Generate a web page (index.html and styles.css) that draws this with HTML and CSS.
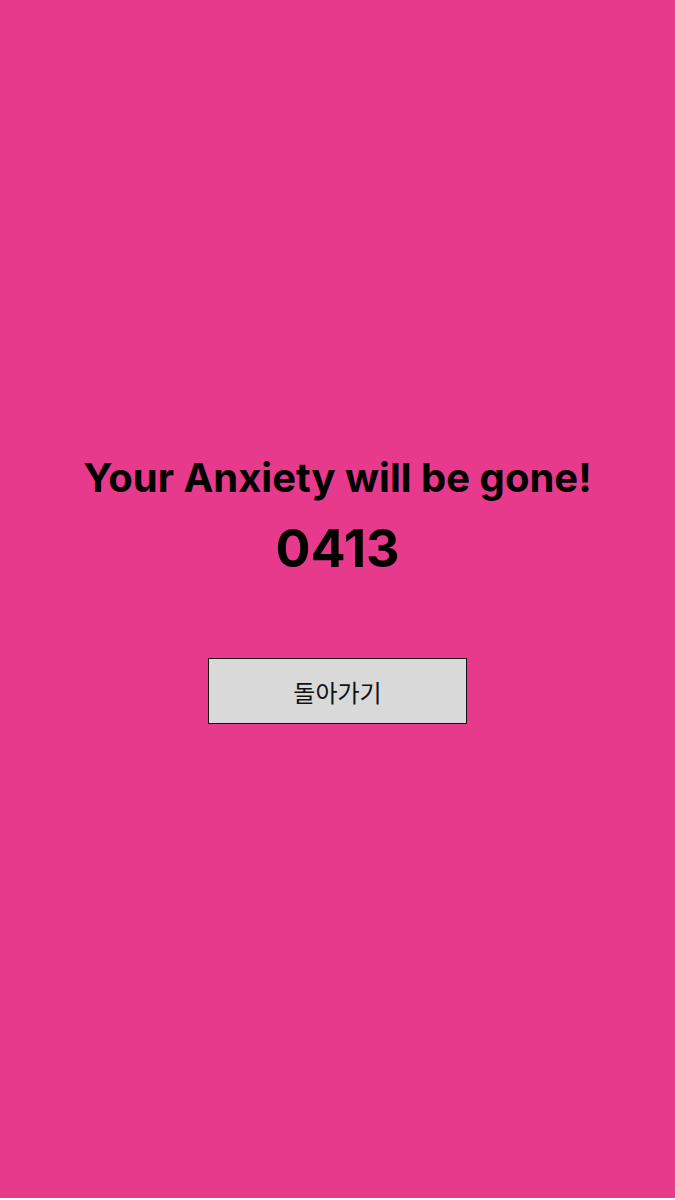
FILE: index.html
```html
<!DOCTYPE html>
<html lang="ko">
<head>
  <meta charset="UTF-8">
  <meta name="viewport" content="width=device-width, initial-scale=1.0">
  <title>Result</title>
  <link rel="stylesheet" href="styles.css">
</head>
<body>
  <main class="screen">
    <h1 class="title">Your Anxiety will be gone!</h1>
    <p class="code">0413</p>
    <button class="back-btn" type="button">돌아가기</button>
  </main>
</body>
</html>
```

FILE: styles.css
```css
* {
  margin: 0;
  padding: 0;
  box-sizing: border-box;
}

body {
  font-family: Inter, "Noto Sans CJK KR", sans-serif;
  background: #fff;
  color: #000;
}

.screen {
  height: 1198px;
  padding-bottom: 20px;
  background: #e83a8c;
  display: flex;
  flex-direction: column;
  align-items: center;
  justify-content: center;
}

.title {
  font-size: 40px;
  font-weight: 700;
  line-height: 48px;
}

.code {
  font-size: 52px;
  font-weight: 700;
  line-height: 60px;
  margin-top: 17px;
}

.back-btn {
  margin-top: 79px;
  width: 259px;
  height: 66px;
  background: #d9d9d9;
  border: 1.5px solid #111;
  font-family: "Noto Sans CJK KR", Inter, sans-serif;
  font-size: 24px;
  color: #111;
}
```
